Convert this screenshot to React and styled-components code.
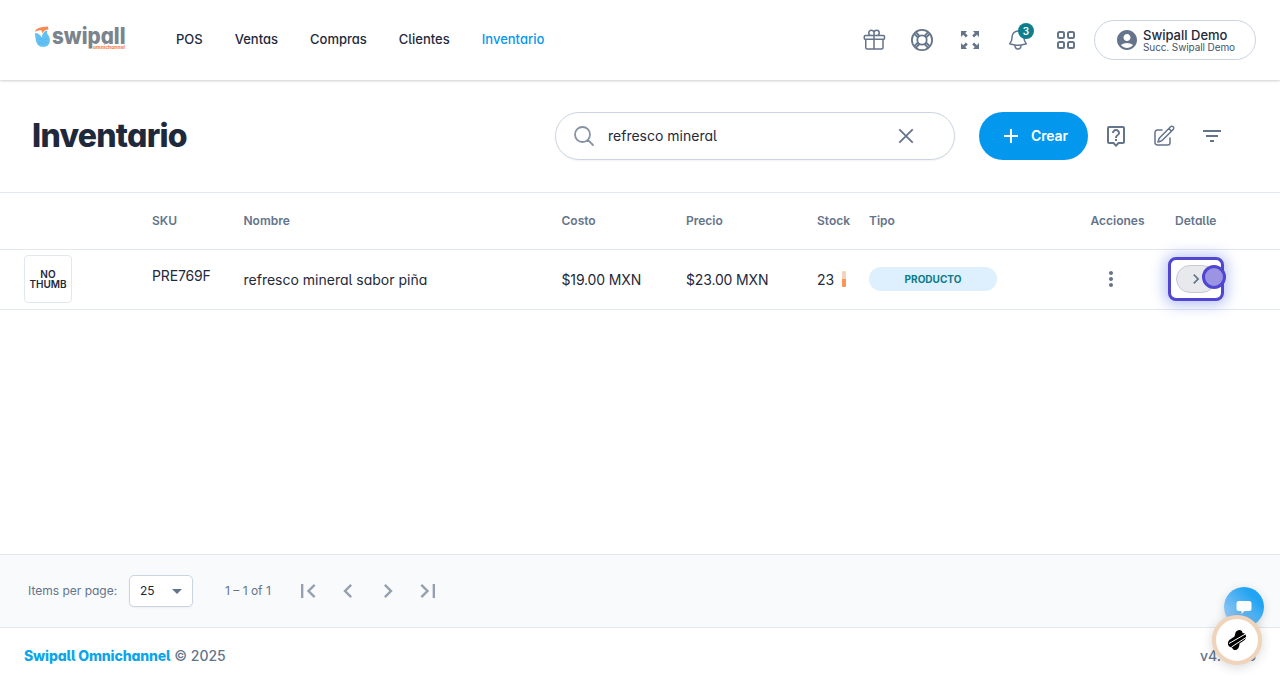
import React from "react";
import styled, { createGlobalStyle, css } from "styled-components";
import {
  HiOutlineGift,
  HiOutlineBell,
  HiOutlinePencilSquare,
  HiOutlineMagnifyingGlass,
} from "react-icons/hi2";
import {
  MdAccountCircle,
  MdOutlineLiveHelp,
  MdFilterList,
  MdMoreVert,
  MdArrowDropDown,
  MdFirstPage,
  MdLastPage,
  MdChevronLeft,
  MdChevronRight,
} from "react-icons/md";

const GlobalStyle = createGlobalStyle`
  * {
    box-sizing: border-box;
  }
  body {
    margin: 0;
    font-family: Inter, "Liberation Sans", sans-serif;
    font-feature-settings: "cv11", "cv05";
    font-size: 14px;
    color: #1e293b;
    background-color: #fff;
    overflow: hidden;
  }
  button,
  input {
    font-family: inherit;
    color: inherit;
  }
`;

const Page = styled.div`
  display: flex;
  flex-direction: column;
  width: 1280px;
  height: 683px;
`;

const Header = styled.header`
  display: flex;
  align-items: center;
  flex: none;
  height: 80px;
  padding: 0 24px 0 34px;
  box-shadow: 0 1px 3px rgba(0, 0, 0, 0.1), 0 1px 2px rgba(0, 0, 0, 0.1);
`;

const Nav = styled.nav`
  display: flex;
  gap: 32px;
  margin-left: 48px;
  padding-bottom: 2px;
`;

const NavItem = styled.a`
  font-size: 13px;
  font-weight: 500;
  line-height: 20px;
  color: ${({ $active }) => ($active ? "#0398ee" : "#1e293b")};
`;

const Tools = styled.div`
  display: flex;
  align-items: center;
  gap: 8px;
  margin-left: auto;
`;

const IconButton = styled.button`
  position: relative;
  display: flex;
  align-items: center;
  justify-content: center;
  width: 40px;
  height: 40px;
  padding: 0;
  border: none;
  background: none;
  color: ${({ $disabled }) => ($disabled ? "#94a0b0" : "#64748b")};
`;

const Badge = styled.span`
  position: absolute;
  top: 3px;
  right: 4px;
  width: 16px;
  height: 16px;
  border-radius: 8px;
  background-color: #0d7f8c;
  color: #fff;
  font-size: 10px;
  font-weight: 600;
  line-height: 16px;
  text-align: center;
`;

const UserButton = styled.button`
  display: flex;
  align-items: center;
  gap: 4px;
  width: 162px;
  height: 40px;
  padding: 0 0 0 20px;
  border: 1px solid #cbd5e1;
  border-radius: 20px;
  background-color: #fff;
  text-align: left;
  svg {
    color: #64748b;
  }
`;

const UserName = styled.div`
  font-size: 13px;
  font-weight: 500;
  line-height: 14px;
`;

const UserBranch = styled.div`
  font-size: 10px;
  line-height: 11px;
  letter-spacing: -0.1px;
  color: #475569;
`;

const Toolbar = styled.div`
  display: flex;
  align-items: center;
  flex: none;
  height: 112px;
  padding: 0 48px 0 32px;
`;

const Title = styled.h1`
  margin: 0 auto 0 0;
  font-size: 32px;
  font-weight: 800;
  letter-spacing: -0.75px;
  line-height: 40px;
`;

const Search = styled.div`
  display: flex;
  align-items: center;
  width: 400px;
  height: 48px;
  padding: 0 36px 0 16px;
  border: 1px solid #cbd5e1;
  border-radius: 24px;
  box-shadow: 0 1px 2px rgba(0, 0, 0, 0.05);
  svg {
    flex: none;
    color: #8793a3;
  }
`;

const SearchInput = styled.input`
  flex: 1;
  min-width: 0;
  margin-left: 12px;
  padding: 0 0 2px;
  border: none;
  outline: none;
  background: none;
  font-size: 14px;
  font-feature-settings: inherit;
`;

const CreateButton = styled.button`
  display: flex;
  align-items: center;
  gap: 8px;
  width: 109px;
  height: 48px;
  margin: 0 8px 0 24px;
  padding: 0 20px;
  border: none;
  border-radius: 24px;
  background-color: #0398ee;
  color: #fff;
  font-size: 14px;
  font-weight: 600;
  letter-spacing: -0.1px;
  span {
    padding-bottom: 2px;
  }
`;

const Actions = styled.div`
  display: flex;
  gap: 8px;
`;

const columns = css`
  display: grid;
  grid-template-columns: 128px 91.5px 318px 124.5px 131px 52px 221.5px 84.5px 81px;
  padding-left: 24px;
`;

const HeadRow = styled.div`
  ${columns}
  align-items: center;
  flex: none;
  height: 58px;
  padding-bottom: 2px;
  border-top: 1px solid #e2e8f0;
  border-bottom: 1px solid #e2e8f0;
  color: #64748b;
  font-size: 12px;
  font-weight: 600;
`;

const Row = styled.div`
  ${columns}
  align-items: center;
  flex: none;
  height: 60px;
  padding-bottom: 1px;
  border-bottom: 1px solid #e2e8f0;
`;

const Cell = styled.div`
  line-height: 20px;
  letter-spacing: ${({ $tight }) => ($tight ? "-0.15px" : "normal")};
  padding-top: ${({ $drop }) => $drop || 0}px;
  padding-bottom: ${({ $lift }) => $lift || 0}px;
`;

const Thumb = styled.div`
  display: flex;
  align-items: center;
  justify-content: center;
  width: 48px;
  height: 48px;
  border: 1px solid #e2e8f0;
  border-radius: 4px;
  font-size: 10px;
  font-weight: 600;
  line-height: 10px;
  text-align: center;
`;

const Stock = styled.div`
  display: flex;
  align-items: center;
  gap: 8px;
`;

const StockBar = styled.span`
  width: 4px;
  height: 16px;
  border-radius: 1px;
  background: linear-gradient(#f0d5bd 50%, #fb9557 50%);
`;

const Chip = styled.div`
  width: 128px;
  height: 24px;
  border-radius: 12px;
  background-color: #def0fd;
  color: #0b7b88;
  font-size: 10px;
  font-weight: 700;
  line-height: 24px;
  text-align: center;
`;

const Highlight = styled.div`
  position: relative;
  display: flex;
  align-items: center;
  width: 56px;
  height: 44px;
  margin-left: -7px;
  padding-left: 5px;
  border: 3px solid #5046d0;
  border-radius: 8px;
  background-color: #fff;
  box-shadow: 0 1px 14px 3px rgba(80, 110, 225, 0.42);
`;

const DetailButton = styled.button`
  display: flex;
  align-items: center;
  justify-content: center;
  width: 40px;
  height: 28px;
  padding: 0;
  border: 1px solid #c3ccd6;
  border-radius: 14px;
  background-color: #e7e9ed;
  color: #64748b;
`;

const Pointer = styled.span`
  position: absolute;
  top: 5px;
  right: -5px;
  width: 24px;
  height: 24px;
  border: 3px solid #5046d0;
  border-radius: 50%;
  background-color: #9a94e2;
`;

const Paginator = styled.div`
  display: flex;
  align-items: center;
  flex: none;
  height: 74px;
  margin-top: auto;
  padding-left: 28px;
  border-top: 1px solid #e2e8f0;
  border-bottom: 1px solid #e2e8f0;
  background-color: #f8fafc;
  color: #64748b;
  font-size: 12px;
`;

const PageLabel = styled.span`
  width: ${({ $width }) => ($width ? `${$width}px` : "auto")};
  padding-bottom: 2px;
  white-space: nowrap;
`;

const PageSize = styled.div`
  display: flex;
  align-items: center;
  justify-content: space-between;
  width: 64px;
  height: 32px;
  margin: 0 32px 0 12px;
  padding: 0 3px 0 10px;
  border: 1px solid #cbd5e1;
  border-radius: 5px;
  background-color: #fff;
  box-shadow: 0 1px 2px rgba(0, 0, 0, 0.05);
  color: #1e293b;
  svg {
    color: #64748b;
  }
`;

const PageButtons = styled.div`
  display: flex;
  margin-left: 16px;
`;

const Footer = styled.footer`
  display: flex;
  align-items: center;
  justify-content: space-between;
  flex: none;
  height: 55px;
  padding: 0 24px;
  color: #64748b;
  font-weight: 500;
`;

const Brand = styled.span`
  color: #0ba5e9;
  font-weight: 800;
  letter-spacing: -0.12px;
`;

const ChatBubble = styled.div`
  position: absolute;
  top: 587px;
  left: 1224px;
  display: flex;
  align-items: center;
  justify-content: center;
  width: 40px;
  height: 40px;
  border-radius: 50%;
  background: linear-gradient(225deg, #22a4f2 25%, #a9cdf5 95%);
  box-shadow: 0 2px 10px rgba(0, 0, 0, 0.15);
`;

const Widget = styled.div`
  position: absolute;
  top: 615px;
  left: 1212px;
  display: flex;
  align-items: center;
  justify-content: center;
  width: 50px;
  height: 50px;
  border: 4px solid #efd3bb;
  border-radius: 50%;
  background-color: #fff;
  box-shadow: 0 2px 12px rgba(0, 0, 0, 0.16);
`;

const LogoText = styled.text`
  font-weight: 800;
  font-feature-settings: "cv11";
`;

const Logo = () => (
  <svg width="94" height="36" viewBox="0 0 94 36">
    <path d="M1 11C4 11 6 13 8 15.500C8 12 10 9 13.500 8.500C12.500 10 13 12 14.500 13.500C17 17 16 22.500 13 24C10 25.500 6 25 4 23C2 21 1.200 15 1 11Z" fill="#62c0f2" />
    <path d="M1 10C1.500 6 6 5 14 4.500L14.500 7.500C11 7.500 9 10 8.500 11.500L7.500 8.500C5 8 3 9 1 10Z" fill="#f58a54" />
    <g fill="#3a9fdc">
      <circle cx="6" cy="17" r=".5" />
      <circle cx="9" cy="18" r=".5" />
      <circle cx="12" cy="17" r=".5" />
      <circle cx="6" cy="20.500" r=".5" />
      <circle cx="9" cy="21.500" r=".5" />
      <circle cx="12" cy="20.500" r=".5" />
    </g>
    <LogoText x="18" y="21.500" textLength="73.500" lengthAdjust="spacingAndGlyphs" fill="#7b838c" fontSize="22.500">
      swipall
    </LogoText>
    <LogoText x="59" y="26.500" textLength="32" lengthAdjust="spacingAndGlyphs" fill="#f58a54" fontSize="4.500">
      omnichannel
    </LogoText>
  </svg>
);

const SupportIcon = () => (
  <svg width="24" height="24" viewBox="0 0 24 24" fill="none" stroke="currentColor" strokeWidth="1.8">
    <circle cx="12" cy="12" r="10.100" />
    <circle cx="12" cy="12" r="4.700" />
    <path d="M8 9.500L4.200 5.800M9.500 8L5.800 4.200M14.500 8l3.700-3.800M16 9.500l3.800-3.700M16 14.500l3.800 3.700M14.500 16l3.700 3.800M9.500 16l-3.700 3.800M8 14.500l-3.800 3.700" />
  </svg>
);

const ExpandIcon = () => (
  <svg width="24" height="24" viewBox="0 0 24 24" fill="currentColor">
    <path d="M3 3h6L7.200 4.900l2.600 2.600-1.900 1.900-2.700-2.600L3 9ZM21 3v6l-2.200-2.200-2.700 2.600-1.900-1.900 2.600-2.600L15 3ZM3 21v-6l2.200 2.200 2.700-2.600 1.900 1.900-2.600 2.600L9 21ZM21 21h-6l1.800-1.900-2.600-2.600 1.900-1.900 2.700 2.600L21 15Z" />
  </svg>
);

const GridIcon = () => (
  <svg width="24" height="24" viewBox="0 0 24 24" fill="none" stroke="currentColor" strokeWidth="2">
    <rect x="4" y="4" width="6" height="6" rx="1.5" />
    <rect x="14" y="4" width="6" height="6" rx="1.5" />
    <rect x="4" y="14" width="6" height="6" rx="1.5" />
    <rect x="14" y="14" width="6" height="6" rx="1.5" />
  </svg>
);

const CloseIcon = () => (
  <svg width="24" height="24" viewBox="0 0 24 24" fill="none" stroke="#64748b" strokeWidth="1.8">
    <path d="M5.300 5.300l13.400 13.400M18.700 5.300L5.300 18.700" />
  </svg>
);

const PlusIcon = () => (
  <svg width="24" height="24" viewBox="0 0 24 24" fill="none" stroke="currentColor" strokeWidth="2">
    <path d="M12 5v14M5 12h14" />
  </svg>
);

const ChatIcon = () => (
  <svg width="16" height="15" viewBox="0 0 16 15" fill="#fff">
    <path d="M3 1h10a2.5 2.5 0 0 1 2.5 2.5v5A2.5 2.5 0 0 1 13 11H8.500L5.500 14V11H3A2.500 2.500 0 0 1 .5 8.500v-5A2.500 2.500 0 0 1 3 1Z" />
  </svg>
);

const WidgetIcon = () => (
  <svg width="20" height="22" viewBox="0 0 20 22">
    <path d="M8.500 3.500C10 0 15.500 0 15.500 4C19.500 4 20.500 9.500 17 11.500L12.500 14.500C12.500 21.500 6.500 23 5 18.500C0 18.500 0 12.500 3 10.500L7.500 7.500Z" fill="#000" />
    <path d="M2 14.500L18.500 5M4.500 18L19 8.500" stroke="#fff" strokeWidth="1" />
  </svg>
);

const navItems = ["POS", "Ventas", "Compras", "Clientes", "Inventario"];
const headers = ["", "SKU", "Nombre", "Costo", "Precio", "Stock", "Tipo", "Acciones", "Detalle"];

const App = () => {
  return (
    <>
      <GlobalStyle />
      <Page>
        <Header>
          <Logo />
          <Nav>
            {navItems.map((item) => (
              <NavItem key={item} $active={item === "Inventario"}>
                {item}
              </NavItem>
            ))}
          </Nav>
          <Tools>
            <IconButton><HiOutlineGift size={24} /></IconButton>
            <IconButton><SupportIcon /></IconButton>
            <IconButton><ExpandIcon /></IconButton>
            <IconButton>
              <HiOutlineBell size={24} />
              <Badge>3</Badge>
            </IconButton>
            <IconButton><GridIcon /></IconButton>
            <UserButton>
              <MdAccountCircle size={24} />
              <div>
                <UserName>Swipall Demo</UserName>
                <UserBranch>Succ. Swipall Demo</UserBranch>
              </div>
            </UserButton>
          </Tools>
        </Header>
        <Toolbar>
          <Title>Inventario</Title>
          <Search>
            <HiOutlineMagnifyingGlass size={24} strokeWidth={1.8} />
            <SearchInput defaultValue='refresco mineral' />
            <CloseIcon />
          </Search>
          <CreateButton>
            <PlusIcon />
            <span>Crear</span>
          </CreateButton>
          <Actions>
            <IconButton><MdOutlineLiveHelp size={24} /></IconButton>
            <IconButton><HiOutlinePencilSquare size={24} /></IconButton>
            <IconButton><MdFilterList size={24} /></IconButton>
          </Actions>
        </Toolbar>
        <HeadRow>
          {headers.map((header) => (
            <span key={header}>{header}</span>
          ))}
        </HeadRow>
        <Row>
          <Thumb>NO<br />THUMB</Thumb>
          <Cell $lift={6} $tight>PRE769F</Cell>
          <Cell $drop={2}>refresco mineral sabor piña</Cell>
          <Cell $drop={2} $tight>$19.00 MXN</Cell>
          <Cell $drop={2} $tight>$23.00 MXN</Cell>
          <Stock><Cell $drop={2}>23</Cell><StockBar /></Stock>
          <Chip>PRODUCTO</Chip>
          <IconButton><MdMoreVert size={24} /></IconButton>
          <Highlight>
            <DetailButton><MdChevronRight size={20} /></DetailButton>
            <Pointer />
          </Highlight>
        </Row>
        <Paginator>
          <PageLabel $width={89}>Items per page:</PageLabel>
          <PageSize>
            <PageLabel>25</PageLabel>
            <MdArrowDropDown size={24} />
          </PageSize>
          <PageLabel $width={47}>1 – 1 of 1</PageLabel>
          <PageButtons>
            <IconButton $disabled><MdFirstPage size={28} /></IconButton>
            <IconButton $disabled><MdChevronLeft size={28} /></IconButton>
            <IconButton $disabled><MdChevronRight size={28} /></IconButton>
            <IconButton $disabled><MdLastPage size={28} /></IconButton>
          </PageButtons>
        </Paginator>
        <Footer>
          <span><Brand>Swipall Omnichannel</Brand> © 2025</span>
          <span>v4.0.106</span>
        </Footer>
      </Page>
      <ChatBubble><ChatIcon /></ChatBubble>
      <Widget><WidgetIcon /></Widget>
    </>
  );
};

export default App;
